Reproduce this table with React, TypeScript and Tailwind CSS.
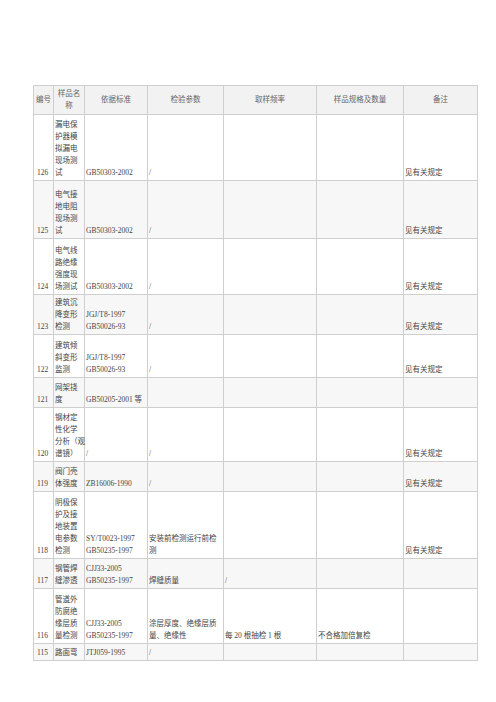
type Row = {
  no: string;
  h: string;
  bg: string;
  name: string[];
  std: string[];
  param: string[];
  freq: string;
  spec: string;
  note: string;
};

const rows: Row[] = [
  { no: "126", h: "h-[66px]", bg: "bg-white", name: ["漏电保", "护器模", "拟漏电", "现场测", "试"], std: ["GB50303-2002"], param: ["/"], freq: "", spec: "", note: "见有关规定" },
  { no: "125", h: "h-[58px]", bg: "bg-[#f7f7f7]", name: ["电气接", "地电阻", "现场测", "试"], std: ["GB50303-2002"], param: ["/"], freq: "", spec: "", note: "见有关规定" },
  { no: "124", h: "h-[56px]", bg: "bg-white", name: ["电气线", "路绝缘", "强度现", "场测试"], std: ["GB50303-2002"], param: ["/"], freq: "", spec: "", note: "见有关规定" },
  { no: "123", h: "h-[40px]", bg: "bg-[#f7f7f7]", name: ["建筑沉", "降变形", "检测"], std: ["JGJ/T8-1997", "GB50026-93"], param: ["/"], freq: "", spec: "", note: "见有关规定" },
  { no: "122", h: "h-[43px]", bg: "bg-white", name: ["建筑倾", "斜变形", "监测"], std: ["JGJ/T8-1997", "GB50026-93"], param: ["/"], freq: "", spec: "", note: "见有关规定" },
  { no: "121", h: "h-[30px]", bg: "bg-[#f7f7f7]", name: ["网架挠", "度"], std: ["GB50205-2001 等"], param: [], freq: "", spec: "", note: "" },
  { no: "120", h: "h-[54px]", bg: "bg-white", name: ["钢材定", "性化学", "分析（观", "谱镜）"], std: ["/"], param: ["/"], freq: "", spec: "", note: "见有关规定" },
  { no: "119", h: "h-[30px]", bg: "bg-[#f7f7f7]", name: ["阀门壳", "体强度"], std: ["ZB16006-1990"], param: ["/"], freq: "", spec: "", note: "见有关规定" },
  { no: "118", h: "h-[67px]", bg: "bg-white", name: ["阴极保", "护及接", "地装置", "电参数", "检测"], std: ["SY/T0023-1997", "GB50235-1997"], param: ["安装前检测运行前检", "测"], freq: "", spec: "", note: "见有关规定" },
  { no: "117", h: "h-[30px]", bg: "bg-[#f7f7f7]", name: ["钢管焊", "缝渗透"], std: ["CJJ33-2005", "GB50235-1997"], param: ["焊缝质量"], freq: "/", spec: "", note: "" },
  { no: "116", h: "h-[55px]", bg: "bg-white", name: ["管道外", "防腐绝", "缘层质", "量检测"], std: ["CJJ33-2005", "GB50235-1997"], param: ["涂层厚度、绝缘层质", "量、绝缘性"], freq: "每 20 根抽检 1 根", spec: "不合格加倍复检", note: "" },
  { no: "115", h: "h-[17px]", bg: "bg-[#f7f7f7]", name: ["路面弯"], std: ["JTJ059-1995"], param: ["/"], freq: "", spec: "", note: "" },
];

const td = "border border-[#cfcfcf] align-bottom px-[1px] pb-[1px] text-left";

function Lines({ items }: { items: string[] }) {
  return (
    <>
      {items.map((t, i) => (
        <div key={i} className="whitespace-nowrap">
          {t}
        </div>
      ))}
    </>
  );
}

export default function App() {
  return (
    <div className="min-h-[702px] bg-white pl-[33px] pt-[85px] font-['Liberation_Serif','Noto_Sans_CJK_SC',serif] text-[7.5px] leading-[12px] text-[#444]">
      <table className="w-[444px] table-fixed border-collapse border border-[#cfcfcf]">
        <colgroup>
          <col className="w-[20px]" />
          <col className="w-[31px]" />
          <col className="w-[63px]" />
          <col className="w-[76px]" />
          <col className="w-[93px]" />
          <col className="w-[87px]" />
          <col className="w-[74px]" />
        </colgroup>
        <thead>
          <tr className="h-[29px] bg-[#f2f2f2] text-[#666]">
            <th className="border border-[#cfcfcf] text-center align-middle font-normal">编号</th>
            <th className="border border-[#cfcfcf] text-center align-middle font-normal">
              样品名
              <br />
              称
            </th>
            <th className="border border-[#cfcfcf] text-center align-middle font-normal">依据标准</th>
            <th className="border border-[#cfcfcf] text-center align-middle font-normal">检验参数</th>
            <th className="border border-[#cfcfcf] text-center align-middle font-normal">取样频率</th>
            <th className="border border-[#cfcfcf] text-center align-middle font-normal">样品规格及数量</th>
            <th className="border border-[#cfcfcf] text-center align-middle font-normal">备注</th>
          </tr>
        </thead>
        <tbody>
          {rows.map((r) => (
            <tr key={r.no} className={`${r.h} ${r.bg}`}>
              <td className={`${td} pl-[3px]`}>{r.no}</td>
              <td className={td}>
                <Lines items={r.name} />
              </td>
              <td className={td}>
                <Lines items={r.std} />
              </td>
              <td className={td}>
                <Lines items={r.param} />
              </td>
              <td className={td}>{r.freq}</td>
              <td className={td}>{r.spec}</td>
              <td className={td}>{r.note}</td>
            </tr>
          ))}
        </tbody>
      </table>
    </div>
  );
}
